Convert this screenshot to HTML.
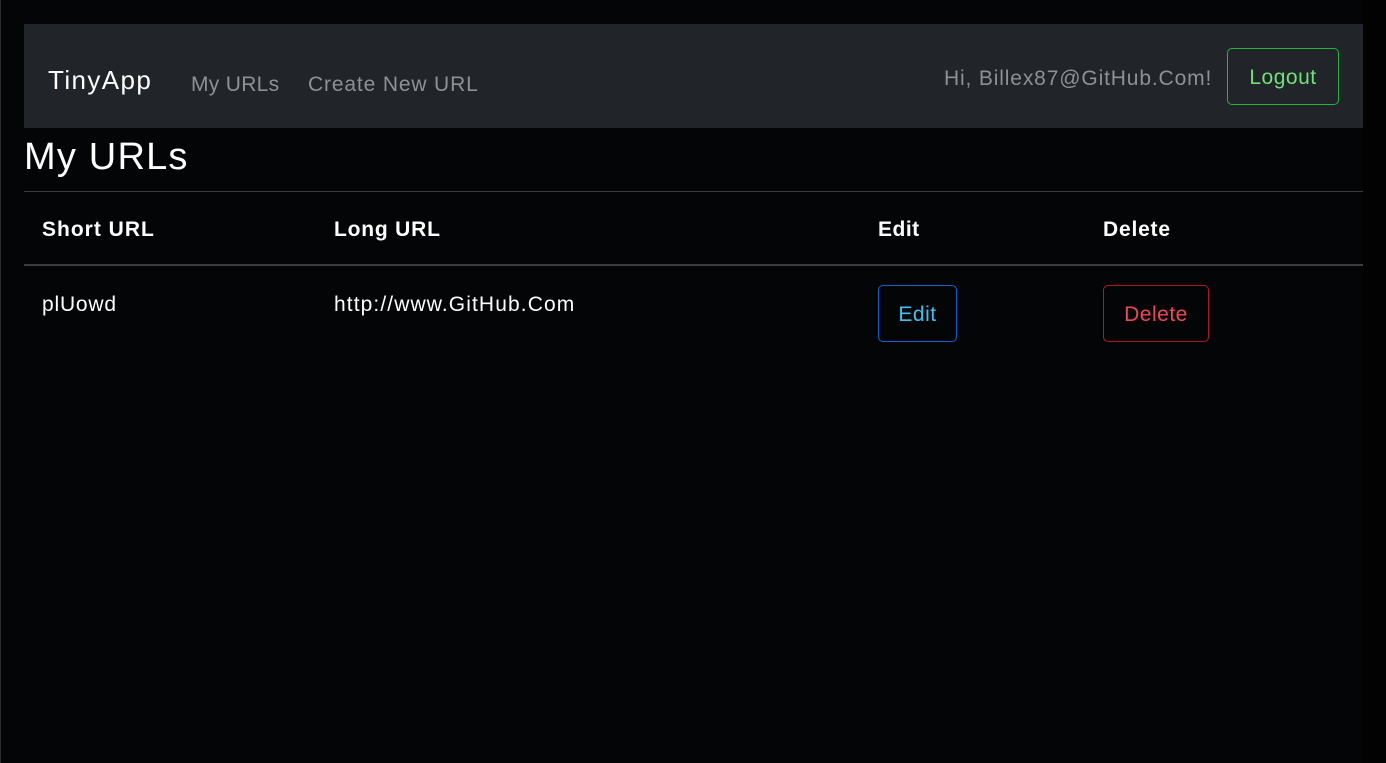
<!DOCTYPE html>
<html><head><meta charset="utf-8"><style>
*{margin:0;padding:0;box-sizing:border-box}
body{width:1386px;height:763px;background:#040507;font-family:"Liberation Sans",sans-serif;position:relative;overflow:hidden;color:#fff}
.edge{position:absolute;left:0;top:0;width:1px;height:763px;background:#2a2c2f}
.rt{position:absolute;left:1363px;top:0;width:23px;height:763px;background:#020203}
nav{position:absolute;left:24px;top:24px;width:1339px;height:104px;background:#212529}
.a{position:absolute;white-space:nowrap}
.btn{position:absolute;border:1px solid;border-radius:5px;font-size:21px;display:flex;align-items:center;justify-content:center;letter-spacing:.5px;padding-top:3px}
.hr{position:absolute;left:24px;width:1339px}
</style></head><body>
<div class="edge"></div><div class="rt"></div>
<nav>
<div class="a" style="left:24px;top:41px;font-size:26px;letter-spacing:1.4px;color:#fff">TinyApp</div>
<div class="a" style="left:167px;top:49px;font-size:21px;letter-spacing:.3px;color:#8e9094">My URLs</div>
<div class="a" style="left:284px;top:49px;font-size:21px;letter-spacing:.85px;color:#8e9094">Create New URL</div>
<div class="a" style="left:920px;top:43px;font-size:21px;letter-spacing:.85px;color:#8e9094">Hi, Billex87@GitHub.Com!</div>
<div class="btn" style="left:1203px;top:24px;width:112px;height:57px;border-color:#28b240;color:#6fe07a">Logout</div>
</nav>
<div class="a" style="left:24px;top:136px;font-size:38px;font-weight:500;letter-spacing:1.2px">My URLs</div>
<div class="hr" style="top:191px;height:1px;background:#3a3c3f"></div>
<div class="a" style="left:42px;top:218px;font-size:21px;font-weight:bold;letter-spacing:1px">Short URL</div>
<div class="a" style="left:334px;top:218px;font-size:21px;font-weight:bold;letter-spacing:.8px">Long URL</div>
<div class="a" style="left:878px;top:218px;font-size:21px;font-weight:bold;letter-spacing:.5px">Edit</div>
<div class="a" style="left:1103px;top:218px;font-size:21px;font-weight:bold;letter-spacing:.8px">Delete</div>
<div class="hr" style="top:264px;height:2px;background:#3b3e41"></div>
<div class="a" style="left:42px;top:293px;font-size:21px;letter-spacing:.8px">plUowd</div>
<div class="a" style="left:334px;top:293px;font-size:21px;letter-spacing:1.1px">http://www.GitHub.Com</div>
<div class="btn" style="left:878px;top:285px;width:79px;height:57px;border-color:#0d62d0;color:#3cc4f0">Edit</div>
<div class="btn" style="left:1103px;top:285px;width:106px;height:57px;border-color:#b0182a;color:#f0475a">Delete</div>
</body></html>
